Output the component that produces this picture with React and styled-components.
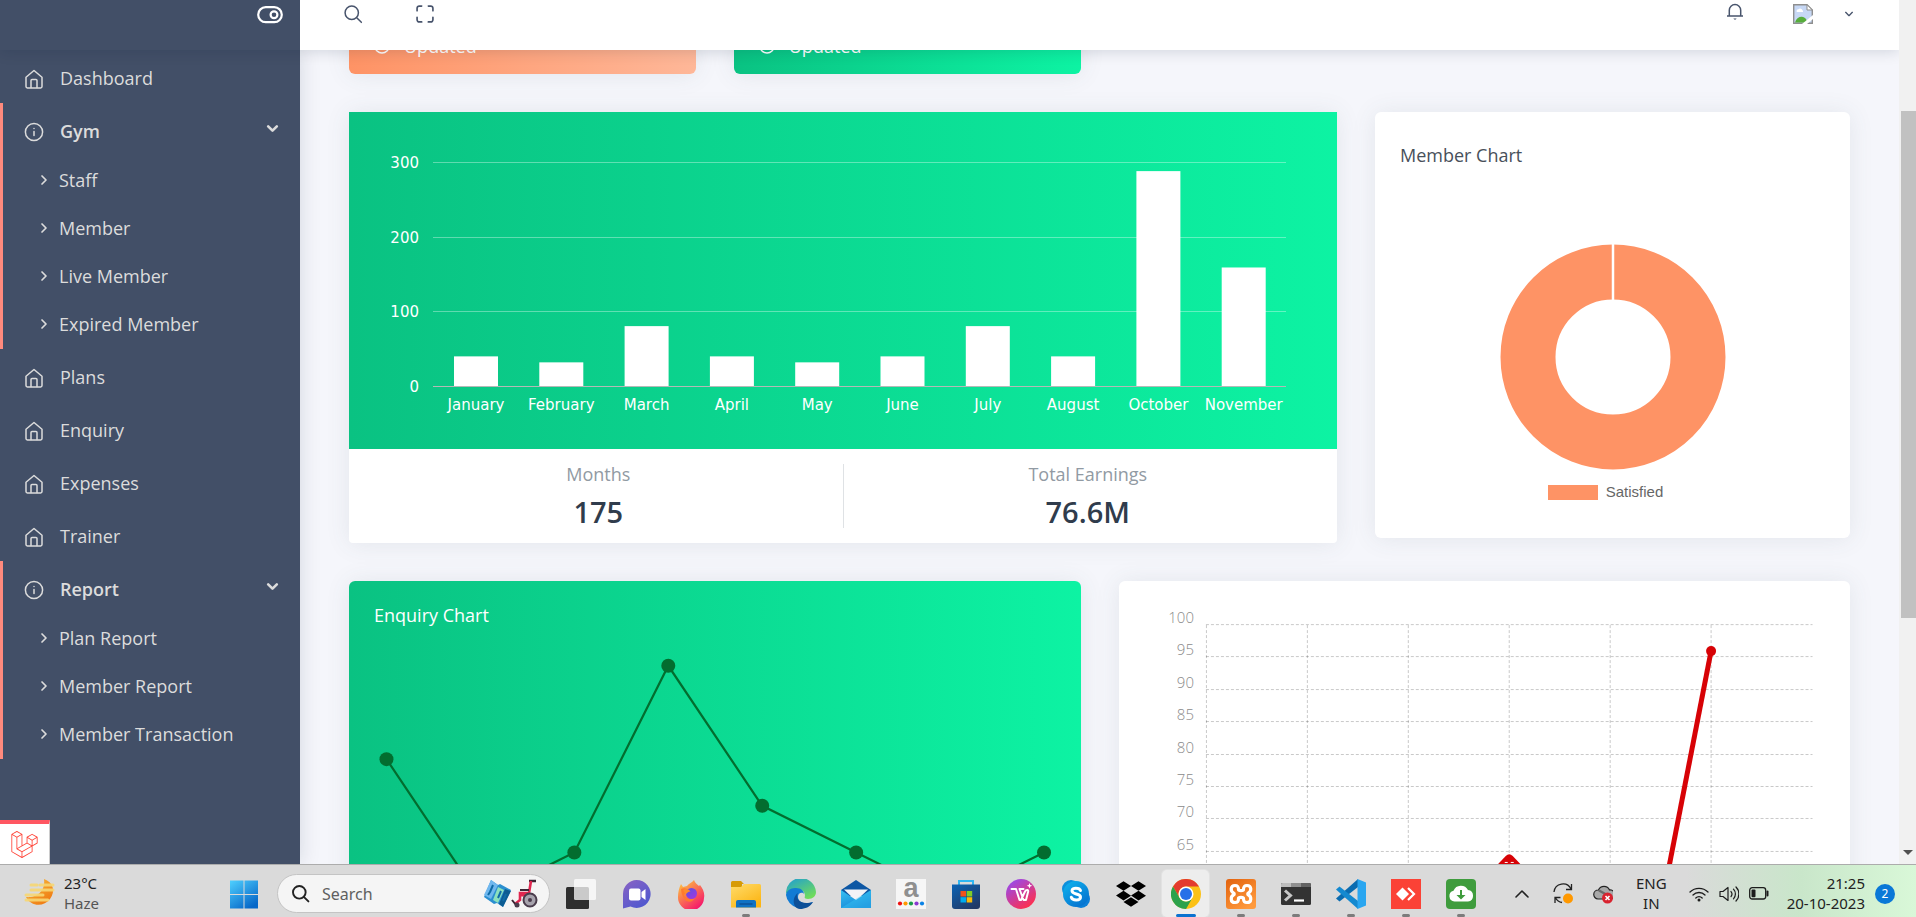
import React from "react";
import styled, { createGlobalStyle, css } from "styled-components";
import { FaDropbox } from "react-icons/fa";
import { SiLaravel } from "react-icons/si";

const uiFont = `"Open Sans", "Noto Sans", sans-serif`;
const systemFont = `"Noto Sans", "Open Sans", sans-serif`;
const chartFont = `"DejaVu Sans", sans-serif`;

const GlobalStyle = createGlobalStyle`
  * { box-sizing: border-box; }
  body { margin: 0; font-family: ${uiFont}; font-size: 18px; line-height: 24px; }
  h2, p, ul { margin: 0; padding: 0; }
  ul { list-style: none; }
  button { border: 0; background: none; padding: 0; font: inherit; color: inherit; }
  a { color: inherit; text-decoration: none; }
  svg { display: block; flex: none; }
`;

/* ---------- page frame ---------- */

const Screen = styled.div`
  display: flex;
  flex-direction: column;
  height: 100vh;
  overflow: hidden;
`;

const Browser = styled.div`
  position: relative;
  display: flex;
  flex: 1;
  min-height: 0;
`;

const Page = styled.div`
  display: flex;
  flex-direction: column;
  flex: 1;
  min-width: 0;
  background: #f5f6fb;
`;

const Header = styled.header`
  position: relative;
  z-index: 3;
  display: flex;
  flex: none;
  height: 50px;
  box-shadow: 0 1px 14px rgba(4, 26, 55, 0.16);
`;

const Brand = styled.div`
  display: flex;
  justify-content: flex-end;
  align-items: flex-start;
  width: 300px;
  padding: 6px 17px 0 0;
  background: #424f67;
  color: #fff;
`;

const TopBar = styled.div`
  display: flex;
  flex: 1;
  justify-content: space-between;
  align-items: flex-start;
  padding: 2px 45px 0 43px;
  background: #fff;
  color: #48546c;
`;

const ActionGroup = styled.div`
  display: flex;
  align-items: center;
  gap: ${(p) => p.$gap}px;
`;

const IconButton = styled.button`
  display: grid;
  place-items: center;
  height: 24px;
  padding-bottom: ${(p) => p.$raised || 0}px;
`;

const Body = styled.div`
  display: flex;
  flex: 1;
  min-height: 0;
`;

/* ---------- sidebar ---------- */

const Sidebar = styled.nav`
  position: relative;
  z-index: 2;
  flex: none;
  width: 300px;
  background: #424f67;
  color: #dcdcdc;
  box-shadow: 0 0 20px rgba(4, 26, 55, 0.14);
`;

const MenuGroup = styled.li`
  position: relative;
  ${(p) =>
    p.$open &&
    css`
      &::before {
        content: "";
        position: absolute;
        inset: 0 auto 0 0;
        width: 3px;
        background: #ff8a7d;
      }
    `}
`;

const MenuLink = styled.a`
  display: flex;
  align-items: center;
  gap: 16px;
  height: ${(p) => (p.$open ? 54 : 53)}px;
  padding: 2px 21px 0 24px;
  font-weight: ${(p) => (p.$open ? 600 : 400)};

  svg:last-child {
    margin-top: ${(p) => (p.$open ? -6 : 2)}px;
  }
  svg:first-child {
    margin-top: 2px;
  }
  span {
    flex: 1;
  }
`;

const SubLink = styled.a`
  display: flex;
  align-items: center;
  gap: 9px;
  height: 48px;
  padding: 0 0 2px 38px;
`;

/* ---------- dashboard ---------- */

const Content = styled.main`
  flex: 1;
  min-width: 0;
  overflow: hidden;
`;

const DashboardGrid = styled.div`
  display: grid;
  grid-template-columns: repeat(12, minmax(0, 1fr));
  align-items: start;
  gap: 38px;
  margin-top: -100px;
  padding: 0 49px;
`;

const greenFill = "linear-gradient(to right, #0ac282, #0df3a3)";
const orangeFill = "linear-gradient(to right, #fe9365, #feb798)";

const Card = styled.section`
  grid-column: span ${(p) => p.$span};
  border-radius: 6px;
  background: ${(p) => p.$fill || "#fff"};
  box-shadow: 0 1px 25px rgba(69, 90, 100, 0.1);
`;

const SummaryCard = styled(Card)`
  display: flex;
  align-items: flex-end;
  height: 124px;
  padding: 0 25px 16px;
  color: #fff;
`;

const UpdatedNote = styled.p`
  display: flex;
  align-items: center;
  gap: 14px;
`;

const EarningsCard = styled(Card)`
  border-radius: 0 0 4px 4px;
`;

const EarningsPlot = styled.div`
  background: ${greenFill};
`;

const StatRow = styled.div`
  display: flex;
  height: 94px;
  padding: 15px 5px;
`;

const Stat = styled.div`
  display: flex;
  flex: 1;
  flex-direction: column;
  align-items: center;
  gap: 10px;
  color: #919aa3;
  line-height: 20px;
  & + & {
    border-left: 1px solid #dfe2e5;
  }
  strong {
    color: #303c4c;
    font-size: 29px;
    font-weight: 600;
    line-height: 36px;
  }
`;

const CardTitle = styled.h2`
  padding: 22px 25px 0;
  color: ${(p) => p.$color || "#48505a"};
  font-size: 18px;
  font-weight: 500;
  line-height: 24px;
`;

const MemberCard = styled(Card)`
  display: flex;
  flex-direction: column;
  height: 426px;
  padding-top: 9px;
`;

const DonutArea = styled.div`
  display: flex;
  flex-direction: column;
  align-items: center;
  padding-top: 77px;
`;

const Legend = styled.p`
  display: flex;
  align-items: center;
  gap: 8px;
  padding-right: 14px;
  margin-top: 10px;
  color: #666;
  font-family: "Liberation Sans", Arial, sans-serif;
  font-size: 15px;
  &::before {
    content: "";
    width: 50px;
    height: 15px;
    background: #fe9365;
  }
`;

const TrendCard = styled(Card)`
  height: 420px;
`;

const Plot = styled.svg`
  width: 100%;
  height: ${(p) => p.$height}px;
  overflow: hidden;
  text {
    font-family: ${(p) => p.$font || uiFont};
    font-size: 15px;
    font-weight: ${(p) => p.$weight || 400};
    fill: ${(p) => p.$ink};
  }
`;

/* ---------- window overlays ---------- */

const ScrollTrack = styled.div`
  position: relative;
  z-index: 4;
  display: flex;
  flex-direction: column;
  justify-content: space-between;
  align-items: flex-end;
  width: 17px;
  padding-top: 111px;
  background: #f1f1f1;
`;

const ScrollThumb = styled.div`
  width: 15px;
  height: 507px;
  background: #c1c1c1;
`;

const ScrollArrow = styled.div`
  margin: 0 3px 9px 0;
  border: 5px solid transparent;
  border-top-color: #505050;
  border-bottom: 0;
`;

const DebugBar = styled.button`
  position: absolute;
  z-index: 4;
  left: 0;
  bottom: 0;
  display: grid;
  place-items: center;
  width: 50px;
  height: 44px;
  border-top: 4px solid #ff5661;
  border-right: 1px solid #ccc;
  background: #fff;
  color: #ff4438;
`;

/* ---------- taskbar ---------- */

const Taskbar = styled.footer`
  position: relative;
  z-index: 5;
  display: flex;
  flex: none;
  align-items: center;
  height: 53px;
  padding: 5px 21px 0 24px;
  border-top: 1px solid #acacac;
  background: linear-gradient(to right, #dadada 88%, #c9e6ca 94%, #d9f8d8 100%);
  color: #222;
  font-family: ${systemFont};
  font-size: 15px;
  line-height: 20px;
`;

const Weather = styled.button`
  display: flex;
  align-items: center;
  gap: 8px;
  width: 205px;
  padding-bottom: 2px;
  text-align: left;
  small {
    display: block;
    color: #555;
    font-size: 15px;
  }
`;

const SearchBox = styled.label`
  display: flex;
  align-items: center;
  gap: 12px;
  width: 273px;
  height: 39px;
  margin: 0 7px 0 18px;
  padding: 0 11px 0 13px;
  border: 1px solid #c4c4c4;
  border-radius: 20px;
  background: #f5f5f5;
  input {
    flex: 1;
    min-width: 0;
    padding: 0;
    border: 0;
    outline: 0;
    background: none;
    font: 16px/24px ${systemFont};
  }
  input::placeholder {
    color: #606060;
    opacity: 1;
  }
`;

const AppButton = styled.button`
  position: relative;
  display: grid;
  place-items: center;
  width: 47px;
  height: 47px;
  margin-right: 8px;
  border-radius: 5px;
  ${(p) =>
    p.$active &&
    css`
      background: #ededed;
      box-shadow: 0 0 0 1px #e2e2e2;
    `}
  ${(p) =>
    p.$mark &&
    css`
      &::after {
        content: "";
        position: absolute;
        bottom: 0;
        width: ${p.$active ? 20 : 8}px;
        height: 3px;
        border-radius: 2px;
        background: ${p.$active ? "#0b72d0" : "#7c7c7c"};
      }
    `}
`;

const Tray = styled.div`
  display: flex;
  align-items: center;
  gap: 10px;
  margin-left: auto;
`;

const TrayButton = styled.button`
  display: grid;
  place-items: center;
  margin-right: ${(p) => p.$after || 0}px;
`;

const TwoLines = styled.span`
  padding-bottom: 2px;
  text-align: ${(p) => p.$align || "center"};
`;

const Badge = styled.span`
  display: grid;
  place-items: center;
  width: 20px;
  height: 20px;
  border-radius: 50%;
  background: #0a78d7;
  color: #fff;
  font-size: 12px;
`;

const HiddenDefs = styled.svg`
  position: absolute;
  width: 0;
  height: 0;
`;

/* ---------- line icons ---------- */

const Line = ({ size = 20, box = 24, width = 2, children }) => (
  <svg width={size} height={size} viewBox={`0 0 ${box} ${box}`} fill="none" stroke="currentColor"
    strokeWidth={width} strokeLinecap="round" strokeLinejoin="round" aria-hidden="true">
    {children}
  </svg>
);

const HomeIcon = () => (
  <Line box={20} width={1.5}>
    <path d="M2 8.2 10 1.5l8 6.7v9.3a1.4 1.4 0 0 1-1.4 1.4H3.4A1.4 1.4 0 0 1 2 17.5z" />
    <path d="M7 18.6v-7.2a1 1 0 0 1 1-1h4a1 1 0 0 1 1 1v7.2" />
  </Line>
);

const InfoIcon = () => (
  <Line box={20} width={1.5}>
    <circle cx="10" cy="10" r="8.6" />
    <path d="M10 9.4v4.2M10 6.4v.2" />
  </Line>
);

const Chevron = ({ right, size, width }) => (
  <Line size={size} box={12} width={width}>
    <path d={right ? "M4 2l4 4-4 4" : "M2 4l4 4 4-4"} />
  </Line>
);

const ToggleIcon = () => (
  <svg width="26" height="18" viewBox="0 0 26 18" fill="none" stroke="#fff" aria-hidden="true">
    <rect x="1.2" y="1.2" width="23.6" height="15" rx="7.5" strokeWidth="2.2" />
    <circle cx="17" cy="8.7" r="3.4" strokeWidth="2.2" />
  </svg>
);

const SearchIcon = ({ size = 20, width = 1.8 }) => (
  <Line size={size} width={width}>
    <circle cx="10.5" cy="10.5" r="8" />
    <path d="m16.5 16.5 5.5 5.5" />
  </Line>
);

const ExpandIcon = () => (
  <Line width={2}>
    <path d="M8 2.5H5A2.5 2.5 0 0 0 2.5 5v3M16 2.5h3A2.5 2.5 0 0 1 21.5 5v3M8 21.5H5A2.5 2.5 0 0 1 2.5 19v-3M16 21.5h3a2.5 2.5 0 0 0 2.5-2.5v-3" />
  </Line>
);

const BellIcon = () => (
  <svg width="18" height="18" viewBox="0 0 18 18" fill="none" stroke="currentColor" strokeWidth="1.5" aria-hidden="true">
    <path d="M3.3 13V7.3a5.7 5.7 0 0 1 11.4 0V13M1 13h16" />
    <path d="M7.4 15.6a1.7 1.7 0 0 0 3.2 0z" fill="currentColor" stroke="none" />
  </svg>
);

const BrokenImageIcon = () => (
  <svg width="20" height="20" viewBox="0 0 20 20" role="img" aria-label="Profile picture">
    <path d="M.7.7H14l5.3 5.3v13.3H.7z" fill="#c7d8f5" stroke="#8f8f8f" strokeWidth="1.4" />
    <path d="M14 .7V6h5.3z" fill="#fff" stroke="#8f8f8f" />
    <path d="M3.5 7.5a2 2 0 0 1 2-2.2 2.4 2.4 0 0 1 4 1 1.5 1.5 0 0 1 .5 1.7H4z" fill="#fff" />
    <path d="M2 18.6c1-4 4-6 7-5.8 2.5.2 4.5 2 5.5 5.8z" fill="#57ad3b" />
    <path d="m9 20 11-9v4l-6 5z" fill="#fff" />
  </svg>
);

/* ---------- sidebar data ---------- */

const menu = [
  { label: "Dashboard" },
  { label: "Gym", items: ["Staff", "Member", "Live Member", "Expired Member"] },
  { label: "Plans" },
  { label: "Enquiry" },
  { label: "Expenses" },
  { label: "Trainer" },
  { label: "Report", items: ["Plan Report", "Member Report", "Member Transaction"] },
];

const SideMenu = () => (
  <Sidebar aria-label="Main menu">
    <ul>
      {menu.map(({ label, items }) => (
        <MenuGroup key={label} $open={!!items}>
          <MenuLink href="#" $open={!!items}>
            {items ? <InfoIcon /> : <HomeIcon />}
            <span>{label}</span>
            {items && <Chevron size={13} width={2.4} />}
          </MenuLink>
          {items && (
            <ul>
              {items.map((item) => (
                <li key={item}>
                  <SubLink href="#">
                    <Chevron right size={12} width={1.7} />
                    {item}
                  </SubLink>
                </li>
              ))}
            </ul>
          )}
        </MenuGroup>
      ))}
    </ul>
  </Sidebar>
);

/* ---------- charts ---------- */

const months = [
  ["January", 41], ["February", 33], ["March", 81.5], ["April", 41], ["May", 33],
  ["June", 41], ["July", 81.5], ["August", 41], ["October", 289], ["November", 160],
];

const EarningsChart = () => {
  const base = 275;
  const unit = 0.747;
  return (
    <Plot viewBox="0 0 988 337" $height={337} $ink="#fff" $font={chartFont} role="img" aria-label="Earnings by month">
      {[300, 200, 100, 0].map((v) => {
        const y = Math.round(base - v * unit) - 0.5;
        return (
          <g key={v}>
            <text x="70" y={y + 5.5} textAnchor="end">{v}</text>
            <path d={`M84 ${y}H937`} stroke="#fff" strokeOpacity={0.35} />
          </g>
        );
      })}
      {months.map(([name, value], i) => {
        const mid = 127 + i * 85.3;
        return (
          <g key={name}>
            <rect x={mid - 22} y={base - value * unit} width="44" height={value * unit} fill="#fff" />
            <text x={mid} y="298" textAnchor="middle">{name}</text>
          </g>
        );
      })}
      <path d={`M84 ${base - 0.5}H937`} stroke="#b5b9b7" />
    </Plot>
  );
};

const DonutChart = () => (
  <svg width="226" height="226" viewBox="0 0 226 226" role="img" aria-label="Satisfied 100 percent">
    <circle cx="113" cy="113" r="85" fill="none" stroke="#fe9365" strokeWidth="55" />
    <path d="M113 0v57" stroke="#fff" strokeWidth="2.5" />
  </svg>
);

const EnquiryChart = () => {
  const points = [12, 9, 10, 14, 11, 10, 9, 10].map((v, i) => [37.5 + i * 94, 271.5 + (10 - v) * 46.7]);
  return (
    <Plot viewBox="0 46 732 353" $height={353} role="img" aria-label="Enquiries">
      <polyline points={points.join(" ")} fill="none" stroke="#036d2f" strokeWidth="2.2" />
      {points.map(([x, y]) => (
        <circle key={x} cx={x} cy={y} r="7" fill="#036d2f" />
      ))}
    </Plot>
  );
};

const ScoreChart = () => {
  const rows = [100, 95, 90, 85, 80, 75, 70, 65];
  const top = 44;
  return (
    <Plot viewBox="0 0 732 420" $height={420} $ink="#8a8a8a" $weight={300} role="img" aria-label="Scores">
      <g stroke="#000" strokeOpacity={0.22} strokeDasharray="3 2">
        {rows.map((v, i) => <path key={v} d={`M87 ${Math.round(top + i * 32.4) - 0.5}H694`} />)}
        {[0, 1, 2, 3, 4, 5].map((i) => <path key={i} d={`M${87.5 + i * 101} ${top}V420`} />)}
      </g>
      {rows.map((v, i) => <text key={v} x="75" y={42 + i * 32.4} textAnchor="end">{v}</text>)}
      <path d="M592.5 70 492 585" stroke="#d70206" strokeWidth="5" />
      <circle cx="592.5" cy="70" r="5" fill="#d70206" />
      <path d="M378 284.5 387 275q3.500-3.500 7 0l9 9.500z" fill="#d70206" />
      <path d="M386 281.500h3M392 281.500h3" stroke="#fff" />
    </Plot>
  );
};

/* ---------- taskbar drawings ---------- */

const Art = ({ children, w = 30, h = 30 }) => (
  <svg width={w} height={h} viewBox={`0 0 ${w} ${h}`} aria-hidden="true">{children}</svg>
);

const Gradients = () => (
  <HiddenDefs aria-hidden="true">
    <defs>
      {[
        ["win", "#4fd0ff", "#0667c8"],
        ["chat", "#8a63c4", "#4f58cf"],
        ["fox", "#ffd43a", "#f5156c"],
        ["foxin", "#5a52e0", "#9b3ae0"],
        ["folder", "#ffdc6b", "#fcb514"],
        ["edgeA", "#1c9bd8", "#6fdc5a"],
        ["mail", "#35c1f3", "#1681d4"],
        ["store", "#0a63b5", "#233a66"],
        ["wps", "#8b4dff", "#ff2f4c"],
        ["skype", "#0fb6ef", "#0672cf"],
        ["xampp", "#e2620e", "#ff9a3c"],
        ["haze", "#f7bd3f", "#ef7a12"],
      ].map(([id, a, b]) => (
        <linearGradient key={id} id={id} x1="0" y1="0" x2="0.7" y2="1">
          <stop stopColor={a} />
          <stop offset="1" stopColor={b} />
        </linearGradient>
      ))}
    </defs>
  </HiddenDefs>
);

const HazeIcon = () => (
  <Art w={32} h={30}>
    <path d="M20 1c9 3 12 12 6 20s-19 8-24-2c7 1 20-3 18-18z" fill="url(#haze)" />
    <path d="M7 7h6M16 7h13M7 12h22M2 17h17M2 22h22" stroke="#f7d774" strokeWidth="3" strokeLinecap="round" opacity=".9" />
  </Art>
);

const WindowsIcon = () => (
  <Art>
    <path d="M1 1.5h13.500V15H1zM15.500 1.500H29V15H15.500zM1 16h13.500v13.500H1zM15.500 16H29v13.500H15.500z" fill="url(#win)" />
  </Art>
);

const MapIcon = () => (
  <Art w={27} h={30}>
    <path d="m7 1 7 5 2-1 11 6-8 17-6-4-3 1-10-7z" fill="#2b8fd0" />
    <path d="m7 1 7 5-7 14-7-4z" fill="#6fb7ee" />
    <path d="m14 8 6 3-6 13-5-3z" fill="#8be0bd" />
    <path d="m21 10 6 2-8 16-4-3z" fill="#0d5c92" />
    <path d="m9 6-3 7M4 16l2-3M17 12l-3 7M22 15l-3 7" stroke="#0f6ba8" strokeWidth="2" />
  </Art>
);

const WheelchairIcon = () => (
  <Art w={27} h={30}>
    <path d="M18 2h7" stroke="#3b2434" strokeWidth="2.5" />
    <path d="M20 2 18 14H9v7l-5 4M9 16l9 1" fill="none" stroke="#e0264f" strokeWidth="2.6" />
    <circle cx="19" cy="21" r="6.5" fill="#a7a3ad" stroke="#4a3c4c" strokeWidth="2" />
    <circle cx="19" cy="21" r="2" fill="#4a3c4c" />
    <path d="M9 11h9M1 21l4 5" stroke="#3b2434" strokeWidth="2" />
    <circle cx="6" cy="26" r="2.5" fill="#4a3c4c" />
  </Art>
);

const apps = [
  ["Task View", "", <Art>
    <rect x="0" y="8" width="23" height="22" rx="1.5" fill="#2e2e2e" />
    <rect x="8" y="0" width="22" height="21" rx="1.5" fill="#fff" opacity=".75" />
  </Art>],
  ["Chat", "", <Art>
    <path d="M15.500 1a14 14 0 1 1-6 26.600L2 29.500V15A14 14 0 0 1 15.500 1z" fill="url(#chat)" />
    <rect x="8" y="9.5" width="11.5" height="12" rx="2" fill="#fff" />
    <path d="m20.500 13 4-3v11l-4-3z" fill="#fff" />
  </Art>],
  ["Firefox", "", <Art>
    <path d="M18 1c1 3 3 4 5 6l1-1c3 4 5 8 4 13a13 13 0 0 1-26-1C2 13 3 9 5 5l2 3 4-1c2-3 5-3 7-6z" fill="url(#fox)" />
    <path d="M5 10c4-2 7 0 9 3-3-1-4 1-6 3 2 5 7 5 11 3-4 7-13 4-14-9z" fill="#ff7a2e" />
    <circle cx="15.500" cy="14.500" r="5.500" fill="url(#foxin)" />
    <path d="M7 11c3-2 6-1 7.500 1.500-2.500 0-3.500 1.500-5 3z" fill="#ff8b2b" />
  </Art>],
  ["File Explorer", "mark", <Art>
    <path d="M0 3.500A1.500 1.500 0 0 1 1.500 2H10l3 3h-2v4H0z" fill="#d79b06" />
    <path d="M0 8h10l3-3h15.500A1.500 1.500 0 0 1 30 6.500V28.500H0z" fill="url(#folder)" />
    <path d="M5 28.500V23a2 2 0 0 1 2-2h16a2 2 0 0 1 2 2v5.500z" fill="#0f72c4" />
    <path d="M8.500 25h13" stroke="#0a4b90" strokeWidth="1.2" />
  </Art>],
  ["Edge", "", <Art>
    <path d="M0 15A15 15 0 0 1 30 13c0 4-3 7-8 7-3 0-4-1-3-3 0-5-4-7-8-7-6 0-11 4-11 5z" fill="url(#edgeA)" />
    <path d="M0 16C0 12 5 8.500 10 9c5 0 8 3 8 6-1-2-6-2-6 3 0 5 6 8 15 5A15 15 0 0 1 0 16z" fill="#127bd4" />
    <path d="M12 14c-3 5 2 13 15 9-3 5-8 7-13 7-8-1-8-12-2-16z" fill="#0d4f98" />
  </Art>],
  ["Mail", "", <Art>
    <path d="M0 11 15 1l15 10v6H0z" fill="#0d57a4" />
    <path d="M3 10.500h24L15 22z" fill="#f3f3f6" />
    <path d="M0 11v18h30V11L15 21z" fill="url(#mail)" />
    <path d="M0 29 18 18l12-7v18z" fill="#38c5f4" opacity=".45" />
  </Art>],
  ["Amazon", "", <Art>
    <rect width="30" height="30" fill="#f6f6f6" />
    <text x="15" y="18" textAnchor="middle" fontFamily="Liberation Sans" fontWeight="700" fontSize="27" fill="#8f8f8f">a</text>
    {["#e11", "#f90", "#1a9c4b", "#8a3bd0", "#0a82e6"].map((c, i) => (
      <circle key={c} cx={4 + i * 5.5} cy="24.5" r="2.1" fill={c} />
    ))}
  </Art>],
  ["Microsoft Store", "", <Art>
    <path d="M8 6V2h14v4" fill="none" stroke="#2eb6f2" strokeWidth="2" />
    <path d="M1 5.500h28V27a3 3 0 0 1-3 3H4a3 3 0 0 1-3-3z" fill="url(#store)" />
    <path d="M9.500 12H15v5.500H9.500z" fill="#f1511b" />
    <path d="M15.700 12h5.500v5.500h-5.500z" fill="#80cc28" />
    <path d="M9.500 18.200H15v5.300H9.500z" fill="#00adef" />
    <path d="M15.700 18.200h5.500v5.300h-5.500z" fill="#fbbc09" />
  </Art>],
  ["WPS Office", "", <Art>
    <circle cx="15" cy="15" r="15" fill="url(#wps)" />
    <path d="M5.500 10h4.500l3.500 11h1.500l4-8.500c1-2 4-2.500 3 .8L20 21h-2.500L13.500 10h4" fill="none" stroke="#fff" strokeWidth="2" strokeLinejoin="round" strokeLinecap="round" />
    <path d="m23.500 4 .8 2 2 .8-2 .8-.8 2-.8-2-2-.8 2-.8z" fill="#fff" />
  </Art>],
  ["Skype", "", <Art>
    <circle cx="10" cy="10" r="9" fill="#0b8fdc" />
    <circle cx="20" cy="20" r="9" fill="#0b7fd8" />
    <circle cx="15" cy="15" r="13" fill="url(#skype)" />
    <path d="M19.500 11.500c-1-3-8.500-3.300-8.500.2 0 4.200 8.500 2.300 8.500 6.300 0 4-8 4-9.200.3" fill="none" stroke="#fff" strokeWidth="3" strokeLinecap="round" />
  </Art>],
  ["Dropbox", "", <FaDropbox size={30} color="#000" />],
  ["Chrome", "active", <Art>
    <circle cx="15" cy="15" r="15" fill="#fbc116" />
    <path d="M2 7.500A15 15 0 0 1 28 7.500H15a7.500 7.500 0 0 0-6.500 11.200z" fill="#e33b2e" />
    <path d="M2 7.500 8.500 18.800A7.500 7.500 0 0 0 21.500 18.800L15 30A15 15 0 0 1 2 7.500z" fill="#2da24c" />
    <circle cx="15" cy="15" r="7.5" fill="#fff" />
    <circle cx="15" cy="15" r="6" fill="#2670e8" />
  </Art>],
  ["XAMPP", "mark", <Art>
    <rect width="30" height="30" rx="3" fill="url(#xampp)" />
    <path d="M9 6.500c3 0 3.500 1.500 3.500 4 0 1.500 5 1.500 5 0 0-2.500.5-4 3.500-4 5 0 4.500 6 1.500 7.500-1 .5-1 1.500 0 2 3 1.500 3.500 7.500-1.500 7.500-3 0-3.500-1.500-3.500-4 0-1.500-5-1.500-5 0 0 2.500-.5 4-3.500 4-5 0-4.500-6-1.500-7.500 1-.5 1-1.500 0-2-3-1.500-3.500-7.500 1.500-7.500z" fill="none" stroke="#fff" strokeWidth="3.2" />
  </Art>],
  ["Terminal", "mark", <Art>
    <rect y="4" width="30" height="22" rx="1.5" fill="#333" />
    <path d="M0 8V5.500A1.500 1.500 0 0 1 1.500 4H10v4z" fill="#bdbdbd" />
    <path d="M10 4h10v4H10z" fill="#8f8f8f" />
    <path d="M20 4h8.500A1.500 1.500 0 0 1 30 5.500V8H20z" fill="#636363" />
    <path d="m4 11.500 5.500 5L4 21.500" fill="none" stroke="#c8c8c8" strokeWidth="3" />
    <path d="M13 21.500h10" stroke="#fff" strokeWidth="2.2" />
  </Art>],
  ["Visual Studio Code", "mark", <Art>
    <path d="M22 0v8L3.500 22.500 0 19.500z" fill="#0b6cb0" />
    <path d="M22 30v-8L3.500 7.500 0 10.500z" fill="#1489d0" />
    <path d="m21.500 0 8.500 3.500v23L21.500 30z" fill="#2aa6f0" />
  </Art>],
  ["AnyDesk", "mark", <Art>
    <path d="M0 0h30v30H0z" fill="#fb4236" />
    <path d="m11.500 8.500 6.500 6.500-6.500 6.500L5 15z" fill="#fff" />
    <path d="m17 9 6 6-6 6" fill="none" stroke="#fff" strokeWidth="2.2" />
  </Art>],
  ["Downloader", "mark", <Art>
    <rect width="30" height="30" rx="4" fill="#3f9c3d" />
    <path d="M8.500 22.500a5.500 5.500 0 0 1-1-10.800A8 8 0 0 1 22 11a5.800 5.800 0 0 1 0 11.500z" fill="#fff" />
    <path d="M14 11v5h-3.500l4.500 4.500 4.500-4.500H16v-5z" fill="#3f9c3d" />
  </Art>],
];

const SyncIcon = () => (
  <Art w={20} h={21}>
    <path d="M1 9A9 9 0 0 1 18 6M18.500 1v5.500H13M2 20v-5.500h5.500M2.500 15A9 9 0 0 0 9 19.500" fill="none" stroke="#222" strokeWidth="1.3" />
    <circle cx="15" cy="15.5" r="5" fill="#ff9800" />
  </Art>
);

const CloudErrorIcon = () => (
  <Art w={20} h={20}>
    <path d="M5 15a4.500 4.500 0 0 1 .5-9A6 6 0 0 1 16.500 6a4.500 4.500 0 0 1 1 9z" fill="#a8a8a8" stroke="#222" strokeWidth="1.2" />
    <path d="M6 6.500 16 12" stroke="#6b6b6b" strokeWidth="2.5" />
    <circle cx="14.5" cy="14" r="5.5" fill="#d8232f" />
    <path d="m12.500 12 4 4m0-4-4 4" stroke="#fff" strokeWidth="1.6" />
  </Art>
);

const WifiIcon = () => (
  <Art w={20} h={16}>
    <path d="M1 6a13 13 0 0 1 18 0M4 9a8.500 8.500 0 0 1 12 0M6.800 12a4.500 4.500 0 0 1 6.400 0" fill="none" stroke="#1c1c1c" strokeWidth="1.3" strokeLinecap="round" />
    <circle cx="10" cy="14" r="1.5" fill="#1c1c1c" />
  </Art>
);

const VolumeIcon = () => (
  <Art w={20} h={18}>
    <path d="M1 6.500h3L9 2.500v13L4 11.500H1zM12 6.500a4 4 0 0 1 0 5M14.500 4.200a7 7 0 0 1 0 9.600M17 2a10 10 0 0 1 0 14" fill="none" stroke="#1c1c1c" strokeWidth="1.2" strokeLinecap="round" strokeLinejoin="round" />
  </Art>
);

const BatteryIcon = () => (
  <Art w={20} h={13}>
    <rect x=".7" y=".7" width="16" height="11.3" rx="2.5" fill="none" stroke="#1c1c1c" strokeWidth="1.3" />
    <rect x="2.5" y="2.5" width="4" height="7.7" rx="1" fill="#1c1c1c" />
    <path d="M18.500 4.500v4" stroke="#1c1c1c" strokeWidth="2" strokeLinecap="round" />
  </Art>
);

const DesktopTaskbar = () => (
  <Taskbar>
    <Gradients />
    <Weather>
      <HazeIcon />
      <span>23°C<small>Haze</small></span>
    </Weather>
    <TrayButton aria-label="Start"><WindowsIcon /></TrayButton>
    <SearchBox>
      <SearchIcon size={19} width={2.4} />
      <input type="search" placeholder="Search" aria-label="Search" />
      <ActionGroup $gap={0}>
        <MapIcon />
        <WheelchairIcon />
      </ActionGroup>
    </SearchBox>
    {apps.map(([name, state, art]) => (
      <AppButton key={name} aria-label={name} $mark={!!state} $active={state === "active"}>{art}</AppButton>
    ))}
    <Tray>
      <TrayButton aria-label="Hidden icons" $after={14}>
        <Line size={14} box={14} width={1.6}><path d="m1 10 6-6 6 6" /></Line>
      </TrayButton>
      <TrayButton aria-label="Sync" $after={10}><SyncIcon /></TrayButton>
      <TrayButton aria-label="Cloud storage" $after={13}><CloudErrorIcon /></TrayButton>
      <TrayButton aria-label="Language" $after={12}><TwoLines>ENG<br />IN</TwoLines></TrayButton>
      <TrayButton aria-label="Network"><WifiIcon /></TrayButton>
      <TrayButton aria-label="Volume"><VolumeIcon /></TrayButton>
      <TrayButton aria-label="Battery" $after={8}><BatteryIcon /></TrayButton>
      <TwoLines as="time" $align="right">21:25<br />20-10-2023</TwoLines>
      <Badge>2</Badge>
    </Tray>
  </Taskbar>
);

const RefreshNote = () => (
  <UpdatedNote>
    <Line size={16} box={16} width={1.5}>
      <circle cx="8" cy="8" r="7" />
      <path d="M8 4v4h3" />
    </Line>
    Updated
  </UpdatedNote>
);

export default function App() {
  return (
    <Screen>
      <GlobalStyle />
      <Browser>
        <Page>
          <Header>
            <Brand>
              <button aria-label="Toggle menu"><ToggleIcon /></button>
            </Brand>
            <TopBar>
              <ActionGroup $gap={52}>
                <IconButton aria-label="Search"><SearchIcon /></IconButton>
                <IconButton aria-label="Full screen"><ExpandIcon /></IconButton>
              </ActionGroup>
              <ActionGroup $gap={49}>
                <IconButton aria-label="Notifications" $raised={4}><BellIcon /></IconButton>
                <ActionGroup as="button" $gap={31} aria-label="Account">
                  <BrokenImageIcon />
                  <Chevron size={10} width={1.6} />
                </ActionGroup>
              </ActionGroup>
            </TopBar>
          </Header>
          <Body>
            <SideMenu />
            <Content>
              <DashboardGrid>
                <SummaryCard $span={3} $fill={orangeFill}><RefreshNote /></SummaryCard>
                <SummaryCard $span="3 / 7" $fill={greenFill}><RefreshNote /></SummaryCard>
                <EarningsCard $span="8 / 9">
                  <EarningsPlot><EarningsChart /></EarningsPlot>
                  <StatRow>
                    <Stat>Months<strong>175</strong></Stat>
                    <Stat>Total Earnings<strong>76.6M</strong></Stat>
                  </StatRow>
                </EarningsCard>
                <MemberCard $span={4}>
                  <CardTitle>Member Chart</CardTitle>
                  <DonutArea>
                    <DonutChart />
                    <Legend>Satisfied</Legend>
                  </DonutArea>
                </MemberCard>
                <TrendCard $span={6} $fill={greenFill}>
                  <CardTitle $color="#fff">Enquiry Chart</CardTitle>
                  <EnquiryChart />
                </TrendCard>
                <TrendCard $span={6}>
                  <ScoreChart />
                </TrendCard>
              </DashboardGrid>
            </Content>
          </Body>
        </Page>
        <ScrollTrack>
          <ScrollThumb />
          <ScrollArrow />
        </ScrollTrack>
        <DebugBar aria-label="Debug bar"><SiLaravel size={27} /></DebugBar>
      </Browser>
      <DesktopTaskbar />
    </Screen>
  );
}
